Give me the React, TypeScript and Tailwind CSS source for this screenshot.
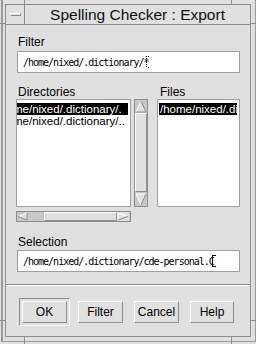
import React from "react";

const LINE = "#8e8e8e";
const FACE = "#e0e0e0";

type Dir = "up" | "down" | "left" | "right";

// motif-style bevelled arrow
function Arrow({ dir, w, h }: { dir: Dir; w: number; h: number }) {
  const r = w - 1;
  const b = h - 1;
  const mx = w / 2;
  const my = h / 2;
  let pts = "";
  let light: number[][] = [];
  let dark: number[][] = [];
  if (dir === "up") {
    pts = `${mx},1 ${r},${b} 1,${b}`;
    light = [[1, b, mx, 1]];
    dark = [[mx, 1, r, b], [1, b, r, b]];
  } else if (dir === "down") {
    pts = `1,1 ${r},1 ${mx},${b}`;
    light = [[1, 1, r, 1], [1, 1, mx, b]];
    dark = [[r, 1, mx, b]];
  } else if (dir === "left") {
    pts = `1,${my} ${r},1 ${r},${b}`;
    light = [[1, my, r, 1]];
    dark = [[r, 1, r, b], [1, my, r, b]];
  } else {
    pts = `1,1 ${r},${my} 1,${b}`;
    light = [[1, 1, 1, b], [1, 1, r, my]];
    dark = [[r, my, 1, b]];
  }
  return (
    <svg width={w} height={h} viewBox={`0 0 ${w} ${h}`} className="block">
      <polygon points={pts} fill={FACE} />
      {light.map((l, i) => (
        <line key={`l${i}`} x1={l[0]} y1={l[1]} x2={l[2]} y2={l[3]} stroke="#ffffff" strokeWidth="1" />
      ))}
      {dark.map((l, i) => (
        <line key={`d${i}`} x1={l[0]} y1={l[1]} x2={l[2]} y2={l[3]} stroke={LINE} strokeWidth="1" />
      ))}
    </svg>
  );
}

const Caret = ({ dotted }: { dotted?: boolean }) => (
  <svg width="5" height="12" viewBox="0 0 5 12" className="block">
    {dotted ? (
      <g fill="#000">
        {[0, 2, 4, 6, 8, 10].map((y) => (
          <rect key={y} x="1" y={y} width="1" height="1" />
        ))}
        <rect x="3" y="0" width="1" height="1" />
        <rect x="3" y="11" width="1" height="1" />
      </g>
    ) : (
      <g fill="#000">
        <rect x="1" y="0" width="1" height="12" />
        <rect x="1" y="0" width="4" height="1" />
        <rect x="1" y="11" width="4" height="1" />
      </g>
    )}
  </svg>
);

const Label = ({ children, className = "" }: { children: React.ReactNode; className?: string }) => (
  <div className={`text-[12px] leading-[14px] text-black pl-[2px] ${className}`}>{children}</div>
);

const Field = ({ text, dotted }: { text: string; dotted?: boolean }) => (
  <div className="ml-[1px] h-[22px] bg-white border border-[#a0a0a0] flex items-center pl-[5px]">
    <span className="font-['DejaVu_Sans_Mono',monospace] text-[10px] tracking-[-1px] text-black whitespace-pre">
      {text}
    </span>
    <span className={dotted ? "-ml-[4px]" : "-ml-[3px]"}>
      <Caret dotted={dotted} />
    </span>
  </div>
);

const Button = ({ label, w = "w-[45px]" }: { label: string; w?: string }) => (
  <div
    className={`${w} h-[22px] flex items-center justify-center border border-t-white border-l-white border-r-[#8e8e8e] border-b-[#8e8e8e] text-[12px] text-black`}
  >
    {label}
  </div>
);

export default function App() {
  return (
    <div className="relative w-[256px] h-[344px] overflow-hidden bg-[#e0e0e0] pl-[1px] pb-[2px] font-['Liberation_Sans',sans-serif]">
      {/* window frame */}
      <div className="h-full border-l-2 border-r border-b border-[#9a9a9a] pl-[2px] pr-[4px] pt-[4px] pb-[4px]">
        <div className="h-full border border-[#8e8e8e] flex flex-col">
          {/* Title bar */}
          <div className="h-[20px] flex border-b border-[#8e8e8e] shrink-0">
            <div className="w-[19px] border-r border-[#8e8e8e] flex items-center justify-center">
              <div className="w-[11px] h-[3px] border-t border-white border-b border-b-[#8e8e8e] border-l border-l-white border-r border-r-[#8e8e8e]" />
            </div>
            <div className="flex-1 flex items-center justify-center text-[15.5px] leading-none text-[#111] pt-[1px]">
              Spelling Checker : Export
            </div>
          </div>

          {/* Body */}
          <div className="px-[10px] flex flex-col">
            <Label className="mt-[10px]">Filter</Label>
            <div className="mt-[2px]">
              <Field text="/home/nixed/.dictionary/*" dotted />
            </div>

            <div className="mt-[12px] flex">
              <Label className="w-[141px]">Directories</Label>
              <Label className="pl-[3px]">Files</Label>
            </div>

            <div className="flex h-[108px]">
              {/* Directories list */}
              <div className="w-[115px] h-full bg-white border border-[#a0a0a0] pt-[3px] pr-[2px] overflow-hidden">
                <div className="h-[12px] bg-black text-white text-[11.5px] leading-[12px] whitespace-nowrap overflow-hidden">
                  <span className="inline-block -ml-[20px]">/home/nixed/.dictionary/.</span>
                </div>
                <div className="h-[12px] text-black text-[11.5px] leading-[12px] whitespace-nowrap overflow-hidden">
                  <span className="inline-block -ml-[20px]">/home/nixed/.dictionary/..</span>
                </div>
              </div>

              {/* vertical scrollbar */}
              <div className="ml-[3px] w-[14px] h-full border border-[#8e8e8e] bg-[#c8c8c8] flex flex-col">
                <Arrow dir="up" w={12} h={13} />
                <div className="flex-1 bg-[#e0e0e0] border-t border-l border-white border-b border-b-[#8e8e8e] border-r border-r-[#8e8e8e]" />
                <div className="mt-[1px]">
                  <Arrow dir="down" w={12} h={13} />
                </div>
              </div>

              {/* Files list */}
              <div className="ml-[9px] flex-1 h-full bg-white border border-[#a0a0a0] pt-[3px] pl-[1px] pr-[2px] overflow-hidden">
                <div className="h-[12px] bg-black text-white text-[11.5px] leading-[12px] whitespace-nowrap overflow-hidden pl-[1px]">
                  /home/nixed/.dictionary/cde-personal.C
                </div>
              </div>
            </div>

            {/* horizontal scrollbar */}
            <div className="mt-[4px] w-[115px] h-[11px] border border-[#8e8e8e] bg-[#c8c8c8] flex">
              <Arrow dir="left" w={11} h={9} />
              <div className="w-[16px]" />
              <div className="w-[73px] bg-[#e0e0e0] border-t border-l border-white border-b border-b-[#8e8e8e] border-r border-r-[#8e8e8e]" />
              <div className="bg-[#e0e0e0]">
                <Arrow dir="right" w={12} h={9} />
              </div>
            </div>

            <Label className="mt-[13px]">Selection</Label>
            <div className="mt-[1px]">
              <Field text="/home/nixed/.dictionary/cde-personal.C" />
            </div>
          </div>

          {/* separator */}
          <div className="mt-[12px] h-[2px] border-t border-[#8e8e8e] border-b border-b-white shrink-0" />

          {/* buttons */}
          <div className="mt-[12px] flex items-center pl-[13px]">
            <div className="w-[51px] h-[28px] p-[2px] border border-t-[#8e8e8e] border-l-[#8e8e8e] border-r-white border-b-white">
              <Button label="OK" />
            </div>
            <div className="ml-[8px]">
              <Button label="Filter" />
            </div>
            <div className="ml-[11px]">
              <Button label="Cancel" />
            </div>
            <div className="ml-[11px]">
              <Button label="Help" w="w-[44px]" />
            </div>
          </div>
        </div>
      </div>

      {/* frame resize corner ticks */}
      <div className="absolute left-[24px] top-0 w-px h-[4px] bg-[#8e8e8e]" />
      <div className="absolute left-[231px] top-0 w-px h-[4px] bg-[#8e8e8e]" />
      <div className="absolute left-[24px] bottom-0 w-px h-[7px] bg-[#8e8e8e]" />
      <div className="absolute left-[231px] bottom-0 w-px h-[7px] bg-[#8e8e8e]" />
      <div className="absolute left-0 top-[23px] w-[5px] h-px bg-[#8e8e8e]" />
      <div className="absolute left-0 top-[320px] w-[5px] h-px bg-[#8e8e8e]" />
      <div className="absolute right-0 top-[23px] w-[5px] h-px bg-[#8e8e8e]" />
      <div className="absolute right-0 top-[320px] w-[5px] h-px bg-[#8e8e8e]" />
    </div>
  );
}
